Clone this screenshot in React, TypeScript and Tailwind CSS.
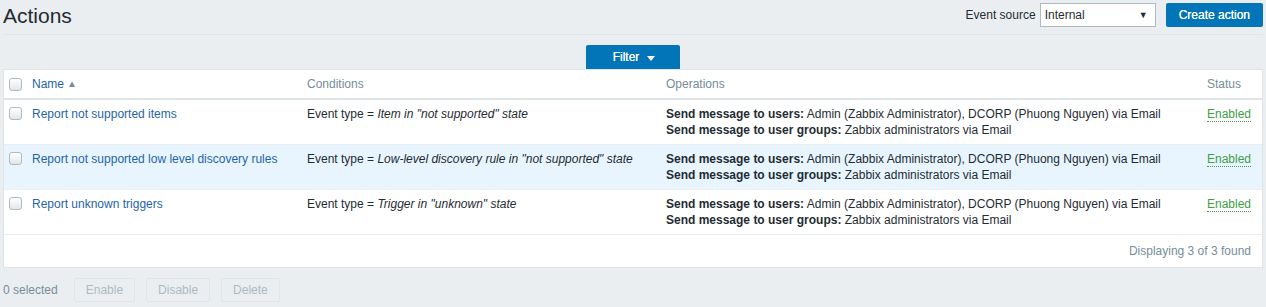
const rows = [
  {
    name: "Report not supported items",
    condition: 'Item in "not supported" state',
  },
  {
    name: "Report not supported low level discovery rules",
    condition: 'Low-level discovery rule in "not supported" state',
    highlight: true,
  },
  {
    name: "Report unknown triggers",
    condition: 'Trigger in "unknown" state',
  },
];

const Checkbox = () => (
  <span className="mt-[1px] inline-block h-[13px] w-[13px] rounded-[3px] border border-[#acbbc2] bg-gradient-to-b from-[#ffffff] to-[#e3e6e8]" />
);

const cols = "grid grid-cols-[23px_275px_359px_541px_1fr]";

export default function App() {
  return (
    <div className="min-h-[307px] bg-[#ebeef0] font-['Liberation_Sans',Arial,sans-serif] text-[12px] leading-[16px] text-[#1f2c33]">
      {/* header */}
      <div className="mx-[3px] flex h-[35px] items-center justify-between border-b border-[#dfe4e7]">
        <h1 className="text-[21px] leading-[24px] text-[#1f2c33] -mt-[3px]">Actions</h1>
        <div className="flex items-center -mt-[4px]">
          <span className="mr-[4px]">Event source</span>
          <div className="flex h-[24px] w-[116px] items-center justify-between border border-[#acbbc2] bg-white pl-[4px] pr-[7px]">
            <span>Internal</span>
            <span className="text-[9px] leading-none">▼</span>
          </div>
          <button className="ml-[10px] h-[24px] rounded-[2px] bg-[#0275b8] px-[13px] text-[12px] text-white [text-shadow:0_0_0.4px_#fff]">
            Create action
          </button>
        </div>
      </div>

      {/* filter tab */}
      <div className="mt-[10px] flex justify-center">
        <div className="flex h-[24px] w-[94px] items-center justify-center gap-[8px] rounded-t-[2px] bg-[#0275b8] pl-[2px] text-white [text-shadow:0_0_0.4px_#fff]">
          <span>Filter</span>
          <span className="mt-[2px] h-0 w-0 border-x-[4px] border-t-[5px] border-x-transparent border-t-white" />
        </div>
      </div>

      {/* table */}
      <div className="mx-[3px] border border-[#dfe4e7] bg-white">
        <div className={`${cols} h-[30px] items-center border-b-2 border-[#dfe4e7] text-[#768d99]`}>
          <div className="pl-[5px] flex items-center"><Checkbox /></div>
          <div className="pl-[5px] text-[#1f65a6] flex items-center gap-[3px]">
            Name <span className="text-[10px] text-[#768d99] leading-none">▲</span>
          </div>
          <div className="pl-[5px]">Conditions</div>
          <div className="pl-[5px]">Operations</div>
          <div className="pl-[5px]">Status</div>
        </div>
        {rows.map((r, i) => (
          <div
            key={i}
            className={`${cols} h-[45px] border-b border-[#ebeef0] pt-[6px] ${r.highlight ? "bg-[#e8f5ff]" : ""}`}
          >
            <div className="pl-[5px]"><Checkbox /></div>
            <div className="pl-[5px] text-[#1f65a6]">{r.name}</div>
            <div className="pl-[5px]">
              Event type = <em>{r.condition}</em>
            </div>
            <div className="pl-[5px]">
              <div>
                <b>Send message to users:</b> Admin (Zabbix Administrator), DCORP (Phuong Nguyen) via Email
              </div>
              <div>
                <b>Send message to user groups:</b> Zabbix administrators via Email
              </div>
            </div>
            <div className="pl-[5px]">
              <span className="border-b border-dotted border-[#429e47] text-[#429e47]">Enabled</span>
            </div>
          </div>
        ))}
        <div className="flex h-[32px] items-center justify-end pr-[11px] text-[#768d99]">
          Displaying 3 of 3 found
        </div>
      </div>

      {/* action bar */}
      <div className="mt-[10px] flex items-center px-[3px]">
        <span className="text-[#768d99] mr-[16px]">0 selected</span>
        {["Enable", "Disable", "Delete"].map((b) => (
          <button
            key={b}
            className="mr-[11px] h-[24px] rounded-[2px] border border-[#dfe4e7] bg-[#ebeef0] px-[11px] text-[12px] text-[#acbbc2]"
          >
            {b}
          </button>
        ))}
      </div>
    </div>
  );
}
